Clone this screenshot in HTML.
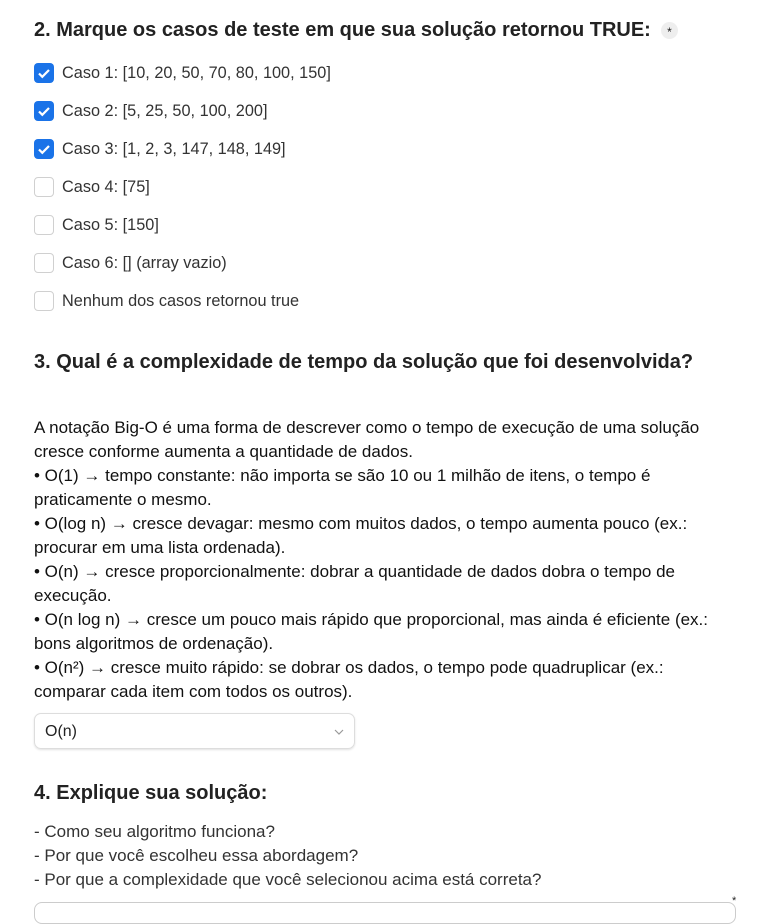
<!DOCTYPE html>
<html><head><meta charset="utf-8"><style>
body{margin:0;width:773px;height:907px;overflow:hidden;background:#fff;font-family:"Liberation Sans",sans-serif;color:#1f1f1f;position:relative}
.a{position:absolute;white-space:nowrap}
h2{position:absolute;margin:0;font-size:20px;font-weight:bold;color:#222;left:34px;white-space:nowrap}
.cb{position:absolute;left:34px;width:20px;height:20px;border-radius:4px;box-sizing:border-box}
.on{background:#1a73e8}
.off{border:1px solid #d0d0d0;background:#fff}
.lb{position:absolute;left:62px;font-size:16.3px;color:#333}
.p{position:absolute;left:34px;font-size:17px;line-height:24px;color:#111;width:740px;white-space:nowrap}
</style></head><body>
<h2 style="top:19px">2. Marque os casos de teste em que sua solução retornou TRUE:</h2>
<div class="a" style="left:661px;top:22px;width:17px;height:17px;border-radius:50%;background:#eee;font-size:12px;text-align:center;line-height:20px">*</div>

<div class="cb on" style="top:63px"><svg width="20" height="20"><path d="M5 10.5l3.3 3.3L15 7" stroke="#fff" stroke-width="2.2" fill="none"/></svg></div>
<div class="lb" style="top:64px">Caso 1: [10, 20, 50, 70, 80, 100, 150]</div>
<div class="cb on" style="top:101px"><svg width="20" height="20"><path d="M5 10.5l3.3 3.3L15 7" stroke="#fff" stroke-width="2.2" fill="none"/></svg></div>
<div class="lb" style="top:102px">Caso 2: [5, 25, 50, 100, 200]</div>
<div class="cb on" style="top:139px"><svg width="20" height="20"><path d="M5 10.5l3.3 3.3L15 7" stroke="#fff" stroke-width="2.2" fill="none"/></svg></div>
<div class="lb" style="top:140px">Caso 3: [1, 2, 3, 147, 148, 149]</div>
<div class="cb off" style="top:177px"></div><div class="lb" style="top:178px">Caso 4: [75]</div>
<div class="cb off" style="top:215px"></div><div class="lb" style="top:216px">Caso 5: [150]</div>
<div class="cb off" style="top:253px"></div><div class="lb" style="top:254px">Caso 6: [] (array vazio)</div>
<div class="cb off" style="top:291px"></div><div class="lb" style="top:292px">Nenhum dos casos retornou true</div>

<h2 style="top:351px">3. Qual é a complexidade de tempo da solução que foi desenvolvida?</h2>
<div class="p" style="top:416px">A notação Big-O é uma forma de descrever como o tempo de execução de uma solução<br>cresce conforme aumenta a quantidade de dados.<br>• O(1) → tempo constante: não importa se são 10 ou 1 milhão de itens, o tempo é<br>praticamente o mesmo.<br>• O(log n) → cresce devagar: mesmo com muitos dados, o tempo aumenta pouco (ex.:<br>procurar em uma lista ordenada).<br>• O(n) → cresce proporcionalmente: dobrar a quantidade de dados dobra o tempo de<br>execução.<br>• O(n log n) → cresce um pouco mais rápido que proporcional, mas ainda é eficiente (ex.:<br>bons algoritmos de ordenação).<br>• O(n²) → cresce muito rápido: se dobrar os dados, o tempo pode quadruplicar (ex.:<br>comparar cada item com todos os outros).</div>

<div class="a" style="left:34px;top:713px;width:321px;height:36px;box-sizing:border-box;border:1px solid #ddd;border-radius:7px;box-shadow:0 1px 2px rgba(0,0,0,.12)">
<span class="a" style="left:10px;top:9px;font-size:16px;color:#222">O(n)</span>
<svg class="a" style="left:299px;top:14px" width="10" height="8"><path d="M1 2l4 4 4-4" stroke="#999" stroke-width="1.2" fill="none"/></svg></div>

<h2 style="top:782px">4. Explique sua solução:</h2>
<div class="p" style="top:820px;color:#333;font-size:17px">- Como seu algoritmo funciona?<br>- Por que você escolheu essa abordagem?<br>- Por que a complexidade que você selecionou acima está correta?</div>
<div class="a" style="left:34px;top:902px;width:700px;height:20px;border:1px solid #ccc;border-radius:8px"></div>
<div class="a" style="left:732px;top:895px;font-size:11px">*</div>
</body></html>
